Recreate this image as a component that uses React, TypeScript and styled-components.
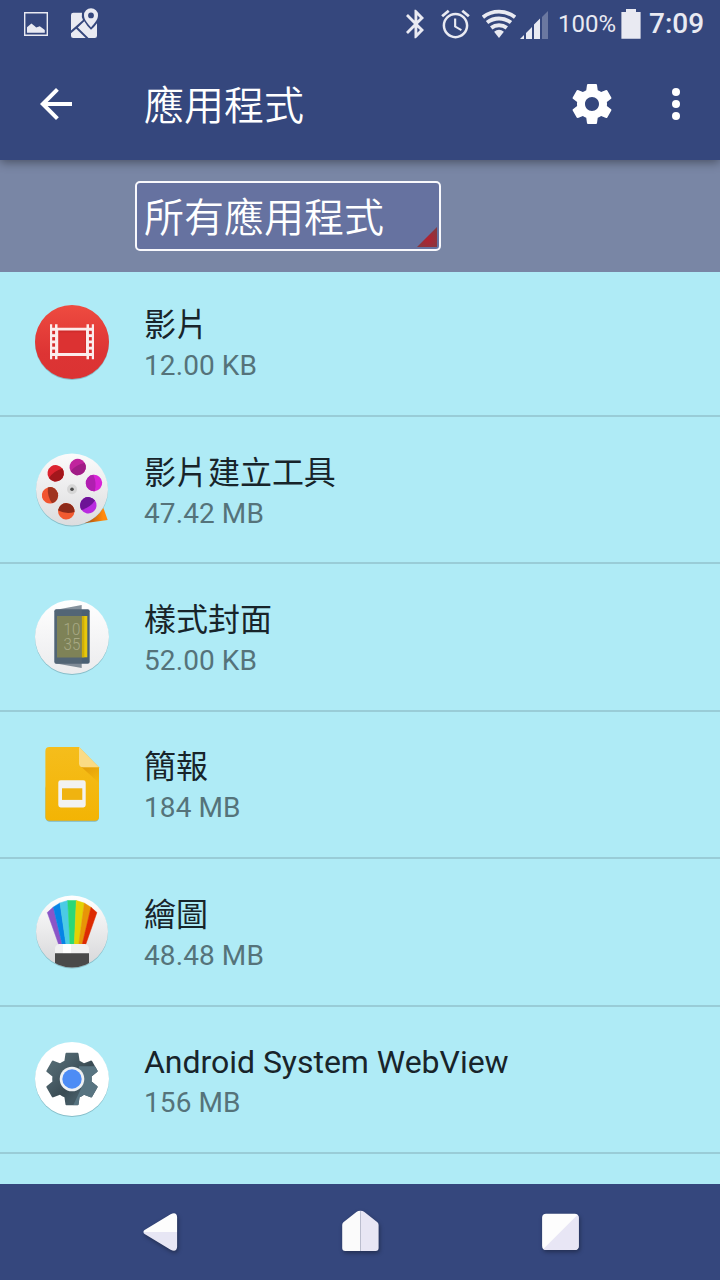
import React, { FunctionComponent, ReactNode } from 'react';
import styled, { createGlobalStyle } from 'styled-components';

const primary = '#35477d';
const statusTint = '#e9eaf2';
const fontFamily = "Roboto, 'Noto Sans CJK TC', sans-serif";

const gearPath =
  'M19.43 12.98c.04-.32.07-.64.07-.98s-.03-.66-.07-.98l2.11-1.65c.19-.15.24-.42.12-.64l-2-3.46c-.12-.22-.39-.3-.61-.22l-2.49 1c-.52-.4-1.08-.73-1.69-.98l-.38-2.65C14.46 2.18 14.25 2 14 2h-4c-.25 0-.46.18-.49.42l-.38 2.65c-.61.25-1.17.59-1.69.98l-2.49-1c-.23-.09-.49 0-.61.22l-2 3.46c-.13.22-.07.49.12.64l2.11 1.65c-.04.32-.07.65-.07.98s.03.66.07.98l-2.11 1.65c-.19.15-.24.42-.12.64l2 3.46c.12.22.39.3.61.22l2.49-1c.52.4 1.08.73 1.69.98l.38 2.65c.03.24.24.42.49.42h4c.25 0 .46-.18.49-.42l.38-2.65c.61-.25 1.17-.59 1.69-.98l2.49 1c.23.09.49 0 .61-.22l2-3.46c.12-.22.07-.49-.12-.64l-2.11-1.65z';

const GlobalStyle = createGlobalStyle`
  body {
    margin: 0;
    background: ${primary};
    overflow: hidden;
  }
`;

const Screen = styled.div`
  display: flex;
  flex-direction: column;
  width: 720px;
  height: 1280px;
  overflow: hidden;
  font-family: ${fontFamily};
`;

const StatusBar = styled.div`
  display: flex;
  align-items: center;
  justify-content: space-between;
  flex: none;
  height: 48px;
  padding: 0 15px 0 22px;
  background: ${primary};
  color: ${statusTint};
  z-index: 2;
`;

const StatusGroup = styled.div`
  display: flex;
  align-items: center;
  height: 48px;

  svg {
    flex: none;
    display: block;
    fill: currentColor;
  }
`;

const StatusSlot = styled.div<{ $gap?: number }>`
  flex: none;
  margin-left: ${({ $gap = 0 }) => $gap}px;
`;

const BatteryLevel = styled.span`
  margin-left: 10px;
  width: 60px;
  font-size: 24px;
  line-height: 52px;
  white-space: nowrap;
`;

const Clock = styled.span`
  margin-left: 8px;
  width: 56px;
  font-size: 28px;
  font-weight: 500;
  line-height: 52px;
`;

const Toolbar = styled.header`
  display: flex;
  align-items: center;
  flex: none;
  height: 112px;
  padding: 0 20px 0 32px;
  background: ${primary};
  color: #fff;
  box-shadow: 0 2px 10px rgba(0, 0, 0, 0.42);
  z-index: 1;
`;

const IconButton = styled.button<{ $gap?: number }>`
  flex: none;
  width: 48px;
  height: 48px;
  margin: 0 0 0 ${({ $gap = 0 }) => $gap}px;
  padding: 0;
  border: 0;
  background: none;
  color: inherit;

  svg {
    display: block;
    fill: currentColor;
  }
`;

const Title = styled.h1`
  flex: 1;
  margin: 0 0 0 64px;
  padding-top: 5px;
  font-size: 40px;
  font-weight: 350;
  line-height: 48px;
`;

const FilterBar = styled.div`
  display: flex;
  align-items: flex-start;
  flex: none;
  height: 91px;
  padding: 21px 0 0 135px;
  background: #7986a5;
`;

const Spinner = styled.div`
  display: flex;
  align-items: flex-end;
  justify-content: space-between;
  box-sizing: border-box;
  width: 306px;
  height: 70px;
  padding: 0 2px 2px 7px;
  border: 2px solid #f8f8fc;
  border-radius: 5px;
  background: #6672a0;
  color: #fff;
  font-size: 40px;
  font-weight: 350;
  line-height: 57px;

  svg {
    display: block;
  }
`;

const List = styled.main`
  flex: 1;
  min-height: 0;
  overflow: hidden;
  background: #afebf6;
`;

const Row = styled.div`
  display: flex;
  align-items: center;
  gap: 32px;
  box-sizing: border-box;
  height: 147.4px;
  padding: 0 32px;
  border-bottom: 2px solid #99ccd7;

  &:first-child {
    margin-top: -2.4px;
  }

  svg {
    flex: none;
    overflow: visible;
  }
`;

const AppName = styled.div`
  height: 48px;
  color: #18242a;
  font-size: 32px;
  letter-spacing: -0.03px;
  line-height: 48px;
`;

const AppSize = styled.div`
  height: 34px;
  color: #55737a;
  font-size: 28px;
  letter-spacing: 0.1px;
  line-height: 34px;
`;

const NavBar = styled.nav`
  display: grid;
  grid-template-columns: repeat(3, 200px);
  justify-content: center;
  place-items: center;
  flex: none;
  height: 96px;
  background: ${primary};

  svg {
    display: block;
    filter: drop-shadow(1px 2px 2px rgba(0, 0, 0, 0.35));
  }
`;

const Disc: FunctionComponent<{ fill: string; r?: number }> = ({ fill, r = 37 }) => (
  <>
    <circle cx="40" cy="41" r={r} fill="#3a6a75" opacity="0.35" />
    <circle cx="40" cy="40" r={r} fill={fill} />
  </>
);

const VideoIcon = () => (
  <svg width="80" height="80" viewBox="0 0 80 80">
    <defs>
      <linearGradient id="video" x1="0" y1="0" x2="0" y2="1">
        <stop offset="0" stopColor="#ee4b40" />
        <stop offset="0.65" stopColor="#dd3434" />
        <stop offset="1" stopColor="#db3333" />
      </linearGradient>
    </defs>
    <Disc fill="url(#video)" />
    <path
      fill="#fbecec"
      fillRule="evenodd"
      d="M18 22.3h2.2v3.4h2.8v-3.4h2.5v3.4h29v-3.4H57v3.4h2.8v-3.4H62v35h-2.2V54H57v3.3h-2.5V54h-29v3.3H23V54h-2.8v3.3H18zM25.5 28.7V51h29V28.7z"
    />
    {[30.5, 36.8, 43, 49.3].map((y) => (
      <g key={y} fill="#d62c2c">
        <rect x="20.2" y={y - 1.7} width="3" height="3.4" />
        <rect x="56.8" y={y - 1.7} width="3" height="3.4" />
      </g>
    ))}
    <path d="M25.5 28.7h29V51h-29z" fill="#dc3232" />
    <path d="M25.5 28.7H54.5V51H53V30.2H25.5z" fill="#c42626" opacity="0.5" />
    <path d="M23.3 28v23.5h2.9V28zM54 28v23.5h2.8V28z" fill="#fbecec" />
  </svg>
);

const reelHoles = [
  { x: 45.7, y: 17.5, dark: '#a01d86', light: '#c0249d', turn: 150 },
  { x: 62, y: 33.5, dark: '#b01fb0', light: '#d824d6', turn: 265 },
  { x: 56.3, y: 55.8, dark: '#6d1496', light: '#b92be0', turn: 325 },
  { x: 34.3, y: 61.8, dark: '#8c2a1a', light: '#f25a30', turn: 5 },
  { x: 18, y: 45.8, dark: '#a03420', light: '#f25530', turn: 75 },
  { x: 23.7, y: 23.8, dark: '#a3171c', light: '#dc2430', turn: 145 },
];

const MovieCreatorIcon = () => (
  <svg width="80" height="80" viewBox="0 0.5 80 80">
    <defs>
      <linearGradient id="reel" x1="0" y1="0" x2="0" y2="1">
        <stop offset="0" stopColor="#fbfbfb" />
        <stop offset="1" stopColor="#dcdcde" />
      </linearGradient>
      <linearGradient id="strip" x1="0" y1="0" x2="1" y2="0">
        <stop offset="0.2" stopColor="#b85a10" />
        <stop offset="0.8" stopColor="#ff8a0c" />
      </linearGradient>
    </defs>
    <Disc fill="url(#reel)" r={36} />
    <path d="M71.3 58.2 75.7 70.5 52.3 73.8Q65.5 69 71.3 58.2z" fill="url(#strip)" />
    {reelHoles.map(({ x, y, dark, light, turn }) => (
      <g key={x} transform={`translate(${x} ${y}) rotate(${turn})`}>
        <circle r="8.2" fill={light} />
        <path d="M-8.2 0A8.2 8.2 0 0 1 8.2 0Q0 3-8.2 0z" fill={dark} />
      </g>
    ))}
    <circle cx="40" cy="39.8" r="5" fill="#d6d6d6" />
    <circle cx="40" cy="39.8" r="1.8" fill="#4a4a4a" />
  </svg>
);

const StyleCoverIcon = () => (
  <svg width="80" height="80" viewBox="0 0 80 80">
    <defs>
      <linearGradient id="cover" x1="0" y1="0" x2="0" y2="1">
        <stop offset="0" stopColor="#ffffff" />
        <stop offset="1" stopColor="#ebebed" />
      </linearGradient>
    </defs>
    <Disc fill="url(#cover)" />
    <rect x="22.3" y="12.3" width="35.4" height="54.4" rx="2" fill="#4a6074" />
    <rect x="25" y="19" width="30.3" height="41.3" fill="#e6c80c" />
    <rect x="49.7" y="19" width="2.6" height="41.3" fill="#cfae0a" />
    <path d="M23 13 49.7 8v63L23 66.3z" fill="#566676" opacity="0.72" />
    <rect x="25" y="19" width="24.7" height="41.3" fill="#7e8257" />
    <g fill="#a9aa86" fontFamily="Roboto" fontWeight="300" fontSize="17">
      <text x="31.6" y="38.3" textLength="16.8" lengthAdjust="spacingAndGlyphs">
        10
      </text>
      <text x="31.6" y="53" textLength="16.8" lengthAdjust="spacingAndGlyphs">
        35
      </text>
    </g>
  </svg>
);

const SlidesIcon = () => (
  <svg width="80" height="80" viewBox="0 0 80 80">
    <defs>
      <linearGradient id="slides" x1="0" y1="0" x2="0" y2="1">
        <stop offset="0" stopColor="#f5bd1c" />
        <stop offset="1" stopColor="#f3b404" />
      </linearGradient>
      <linearGradient id="fold" x1="0" y1="0" x2="0.7" y2="1">
        <stop offset="0" stopColor="#e09a0a" />
        <stop offset="1" stopColor="#f3b60c" />
      </linearGradient>
    </defs>
    <rect x="13.4" y="40" width="53.6" height="37.8" rx="4.5" fill="#3a6a75" opacity="0.4" />
    <path
      d="M17.4 3H47l20 20.3v49.4a4 4 0 0 1-4 4H17.4a4 4 0 0 1-4-4V7a4 4 0 0 1 4-4z"
      fill="url(#slides)"
    />
    <path d="M48.4 22 67 39V23.3H51z" fill="url(#fold)" />
    <path d="M47 3l20 20.3H51A4 4 0 0 1 47 19.3z" fill="#fadb85" />
    <rect x="26.3" y="36.3" width="27.4" height="27.2" rx="2.4" fill="#f2f2f2" />
    <rect x="30" y="44.3" width="20.3" height="11.6" fill="#f0b310" />
  </svg>
);

const fanColors = ['#8b55c7', '#0684e6', '#4bcbe5', '#2bd877', '#e3d204', '#e89407', '#dd2a02'];
const fanTop = [
  [15.3, 21],
  [21.3, 15.6],
  [28, 11.4],
  [35.7, 9],
  [44.3, 9],
  [52.3, 11.6],
  [59, 15.8],
  [64.9, 21],
];
const fanBottom = [26.7, 30.2, 34, 38, 42.3, 46.7, 50.2, 53.7];

const SketchIcon = () => (
  <svg width="80" height="80" viewBox="0 0.5 80 80">
    <defs>
      <linearGradient id="sketch" x1="0" y1="0" x2="0" y2="1">
        <stop offset="0" stopColor="#ffffff" />
        <stop offset="1" stopColor="#d6d6d8" />
      </linearGradient>
      <clipPath id="disc">
        <circle cx="40" cy="40" r="36" />
      </clipPath>
    </defs>
    <Disc fill="url(#sketch)" r={36} />
    {fanColors.map((color, i) => (
      <path
        key={color}
        fill={color}
        stroke={color}
        strokeWidth="0.5"
        d={`M${fanTop[i][0]} ${fanTop[i][1]}L${fanTop[i + 1][0]} ${fanTop[i + 1][1]}L${fanBottom[i + 1]} 53H${fanBottom[i]}z`}
      />
    ))}
    <g clipPath="url(#disc)">
      <path d="M23 62v-5a4.4 4.4 0 0 1 4.4-4.4h25.2A4.4 4.4 0 0 1 57 57v5z" fill="#f1f1f1" />
      <rect x="31" y="52.6" width="8" height="9.4" fill="#fff" />
      <path d="M23 61.7h34V78H23z" fill="#4a4a4a" />
    </g>
  </svg>
);

const WebViewIcon = () => (
  <svg width="80" height="80" viewBox="0 0 80 80">
    <defs>
      <linearGradient id="gear" x1="0" y1="0" x2="1" y2="1">
        <stop offset="0" stopColor="#5a7179" />
        <stop offset="0.3" stopColor="#4b6069" />
        <stop offset="0.55" stopColor="#3a4b53" />
        <stop offset="0.7" stopColor="#455a64" />
      </linearGradient>
      <clipPath id="gear-clip">
        <path d={gearPath} />
      </clipPath>
    </defs>
    <Disc fill="#fff" />
    <g transform="translate(8.4 8.4) scale(2.633)">
      <path d={gearPath} fill="url(#gear)" />
      <path d="M14.6 7.2H24V24H11.5l4-8.5z" fill="#587481" clipPath="url(#gear-clip)" />
    </g>
    <circle cx="40" cy="40" r="12.3" fill="#eef0f2" />
    <circle cx="40" cy="40" r="9.7" fill="#4d8cf5" />
  </svg>
);

interface AppEntry {
  name: string;
  size: string;
  icon: ReactNode;
}

const apps: AppEntry[] = [
  { name: '影片', size: '12.00 KB', icon: <VideoIcon /> },
  { name: '影片建立工具', size: '47.42 MB', icon: <MovieCreatorIcon /> },
  { name: '樣式封面', size: '52.00 KB', icon: <StyleCoverIcon /> },
  { name: '簡報', size: '184 MB', icon: <SlidesIcon /> },
  { name: '繪圖', size: '48.48 MB', icon: <SketchIcon /> },
  { name: 'Android System WebView', size: '156 MB', icon: <WebViewIcon /> },
];

const PictureIcon = () => (
  <svg width="28" height="32" viewBox="0 0 28 32">
    <path d="M2 4h24v24H2zm1.4 1.4v21.2h21.2V5.4z" fillRule="evenodd" />
    <path d="M5 24.8v-5.6l4.4-3.7 3.2 2.6 1.6 1.4 3.6-1.3 5 3.8v2.8z" />
  </svg>
);

const MapIcon = () => (
  <svg width="28" height="32" viewBox="0 0 28 32">
    <path d="M2.3 4.7H11q-.8 4 1 7.4L0 22.6V7q0-2.3 2.3-2.3z" />
    <path d="M5.2 20.7 14.7 30H2.3Q0 30 0 27.7v-2.5z" />
    <path d="M6.8 19.4l6.5-6.2q2.6 4.7 6.7 8.6 3.5-3 6-6.6v12.500q0 2.300-2.300 2.300h-6.200z" />
    <path
      d="M20 .3a7 7 0 0 1 7 7c0 4.8-4.2 8.4-7 12.3-2.8-3.9-7-7.5-7-12.3a7 7 0 0 1 7-7zm0 4.2a2.9 2.9 0 1 0 0 5.8 2.9 2.9 0 0 0 0-5.8z"
      fillRule="evenodd"
    />
  </svg>
);

const BluetoothIcon = () => (
  <svg width="18" height="30" viewBox="5 1.5 12.71 21">
    <path d="M17.71 7.71L12 2h-1v7.59L6.41 5 5 6.41 10.59 12 5 17.59 6.41 19 11 14.41V22h1l5.71-5.71-4.3-4.29 4.3-4.29zM13 5.83l1.88 1.88L13 9.59V5.83zm1.88 10.46L13 18.17v-3.76l1.88 1.88z" />
  </svg>
);

const AlarmIcon = () => (
  <svg width="29" height="30" viewBox="2 1.4 20 21">
    <path d="M22 5.72l-4.6-3.86-1.29 1.53 4.6 3.86L22 5.72zM7.88 3.39L6.6 1.86 2 5.71l1.29 1.53 4.59-3.85zM12.5 8H11v6l4.75 2.85.75-1.23-4-2.37V8zM12 4c-4.97 0-9 4.03-9 9s4.02 9 9 9c4.97 0 9-4.03 9-9s-4.03-9-9-9zm0 16.25c-4 0-7.25-3.25-7.25-7.25S8 5.75 12 5.75s7.25 3.25 7.25 7.25-3.25 7.25-7.25 7.25z" />
  </svg>
);

// Concentric 76 degree arcs around the wedge tip.
const arc = (r: number) => {
  const dx = r * 0.61;
  const dy = r * 0.79;
  return `M${17 - dx} ${29 - dy}A${r} ${r} 0 0 1 ${17 + dx} ${29 - dy}`;
};

const WifiIcon = () => (
  <svg width="34" height="30" viewBox="0 0 34 30">
    {[26.4, 19.6, 12.8].map((r) => (
      <path key={r} d={arc(r)} fill="none" stroke="currentColor" strokeWidth="3.9" />
    ))}
    <path d={`${arc(8)}L17 29z`} />
  </svg>
);

const SignalIcon = () => (
  <svg width="28" height="30" viewBox="0 0 28 30">
    <path d="M0 30l4-4v4zM6 24l6-6v12H6zM14 15.5l6-6V30h-6z" />
    <path d="M22 8l6-6v28h-6z" opacity="0.3" />
  </svg>
);

const BatteryIcon = () => (
  <svg width="20" height="30" viewBox="0 0 20 30">
    <path d="M5 0h10v3h4.600v26.700H.4V3H5z" />
  </svg>
);

const App = () => (
  <>
    <GlobalStyle />
    <Screen>
      <StatusBar>
        <StatusGroup>
          <PictureIcon />
          <StatusSlot $gap={21}>
            <MapIcon />
          </StatusSlot>
        </StatusGroup>
        <StatusGroup>
          <BluetoothIcon />
          <StatusSlot $gap={17}>
            <AlarmIcon />
          </StatusSlot>
          <StatusSlot $gap={12}>
            <WifiIcon />
          </StatusSlot>
          <StatusSlot $gap={4}>
            <SignalIcon />
          </StatusSlot>
          <BatteryLevel>100%</BatteryLevel>
          <StatusSlot $gap={3}>
            <BatteryIcon />
          </StatusSlot>
          <Clock>7:09</Clock>
        </StatusGroup>
      </StatusBar>
      <Toolbar>
        <IconButton aria-label="back">
          <svg width="48" height="48" viewBox="0 0 24 24">
            <path d="M20 11H7.83l5.59-5.59L12 4l-8 8 8 8 1.41-1.41L7.83 13H20v-2z" />
          </svg>
        </IconButton>
        <Title>應用程式</Title>
        <IconButton aria-label="settings">
          <svg width="48" height="48" viewBox="0 0 24 24">
            <path
              fillRule="evenodd"
              d={`${gearPath}M12 15.5c-1.93 0-3.5-1.57-3.5-3.5s1.57-3.5 3.5-3.5 3.5 1.57 3.5 3.5-1.57 3.5-3.5 3.5z`}
            />
          </svg>
        </IconButton>
        <IconButton aria-label="more" $gap={36}>
          <svg width="48" height="48" viewBox="0 0 24 24">
            <circle cx="12" cy="6" r="2" />
            <circle cx="12" cy="12" r="2" />
            <circle cx="12" cy="18" r="2" />
          </svg>
        </IconButton>
      </Toolbar>
      <FilterBar>
        <Spinner>
          所有應用程式
          <svg width="20" height="20" viewBox="0 0 20 20">
            <defs>
              <radialGradient id="corner" cx="0.55" cy="0.6" r="0.55">
                <stop offset="0" stopColor="#b3212f" />
                <stop offset="1" stopColor="#88373f" />
              </radialGradient>
            </defs>
            <path d="M20 0v20H0z" fill="url(#corner)" />
          </svg>
        </Spinner>
      </FilterBar>
      <List>
        {apps.map(({ name, size, icon }) => (
          <Row key={name}>
            {icon}
            <div>
              <AppName>{name}</AppName>
              <AppSize>{size}</AppSize>
            </div>
          </Row>
        ))}
      </List>
      <NavBar>
        <svg width="36" height="44" viewBox="-0.6 0 36 44">
          <path d="M2 20 28 4.2Q34 1.5 34.5 7v15H.8Q1 20.6 2 20z" fill="#fdfdfd" />
          <path d="M.8 22h33.7v15q-.5 5.5-6.5 2.8L2 24Q1 23.4.8 22z" fill="#e7e6f4" />
        </svg>
        <svg width="38" height="44" viewBox="-0.4 0 38 44">
          <path d="M19 .8q-2.5 0-4 1.2L2 12.3Q.8 13.2.8 15v23q0 3 3 3H19z" fill="#fbfbfb" />
          <path d="M19 .8q2.5 0 4 1.2l13 10.3q1.2.9 1.2 2.7v23q0 3-3 3H19z" fill="#e8e6f4" />
        </svg>
        <svg width="38" height="38" viewBox="-0.4 0 38 38">
          <rect x=".7" y=".7" width="36.6" height="36.3" rx="4" fill="#fdfdfd" />
          <path d="M36 2q1.300 1 1.300 2.700V33q0 4-4 4H4.700Q3 37 2 36z" fill="#e8e6f5" />
        </svg>
      </NavBar>
    </Screen>
  </>
);

export default App;
